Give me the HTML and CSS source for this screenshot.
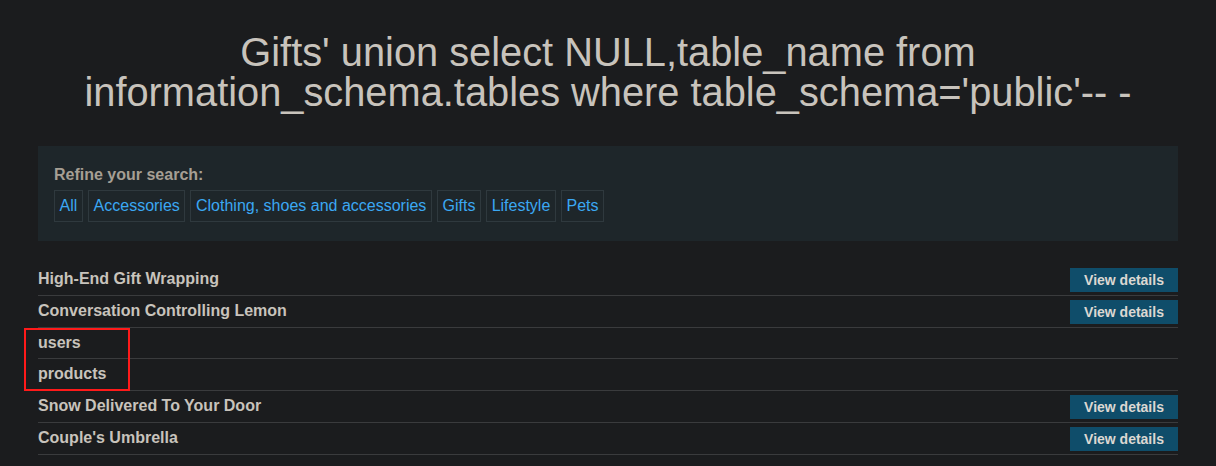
FILE: index.html
```html
<!DOCTYPE html>
<html>
<head>
<meta charset="utf-8">
<link rel="stylesheet" href="styles.css">
</head>
<body>
<div class="container">
  <h1 class="title">Gifts' union select NULL,table_name from information_schema.tables where table_schema='public'-- -</h1>
  <section class="refine">
    <div class="refine-label">Refine your search:</div>
    <div class="filters">
      <a class="filter">All</a>
      <a class="filter">Accessories</a>
      <a class="filter">Clothing, shoes and accessories</a>
      <a class="filter">Gifts</a>
      <a class="filter">Lifestyle</a>
      <a class="filter">Pets</a>
    </div>
  </section>
  <div class="results">
    <div class="row"><span class="name">High-End Gift Wrapping</span><a class="btn">View details</a></div>
    <div class="row"><span class="name">Conversation Controlling Lemon</span><a class="btn">View details</a></div>
    <div class="row short"><span class="name">users</span></div>
    <div class="row"><span class="name">products</span></div>
    <div class="row"><span class="name">Snow Delivered To Your Door</span><a class="btn">View details</a></div>
    <div class="row"><span class="name">Couple's Umbrella</span><a class="btn">View details</a></div>
    <div class="highlight"></div>
  </div>
</div>
</body>
</html>
```
FILE: styles.css
```css
html, body {
  margin: 0;
  padding: 0;
  background: #1b1c1e;
  font-family: "Liberation Sans", Arial, sans-serif;
  color: #c8c3bc;
}
.container {
  width: 1140px;
  margin: 0 auto;
  padding-top: 32px;
}
.title {
  margin: 0;
  text-align: center;
  font-weight: normal;
  font-size: 39.8px;
  line-height: 40px;
  color: #c8c3bc;
  padding: 0 40px;
}
.refine {
  margin-top: 34px;
  background: #1e262a;
  padding: 18px 16px 19px 16px;
}
.refine-label {
  font-weight: bold;
  font-size: 16px;
  line-height: 21px;
  color: #a69f94;
  margin-bottom: 5px;
}
.filters {
  display: flex;
  gap: 5px;
}
.filter {
  display: block;
  border: 1px solid #2f393e;
  padding: 0 4.6px;
  height: 30px;
  line-height: 30px;
  font-size: 16px;
  color: #3ba8f3;
}
.results {
  position: relative;
  margin-top: 23px;
}
.row {
  display: flex;
  align-items: center;
  justify-content: space-between;
  height: 31px;
  border-bottom: 1px solid #3a3b3d;
}
.row.short {
  height: 30px;
}
.name {
  font-weight: bold;
  font-size: 16px;
  color: #c8c3bc;
  padding-bottom: 1px;
}
.btn {
  display: block;
  width: 108px;
  height: 24px;
  line-height: 24px;
  text-align: center;
  background: #0f4d6a;
  color: #dcd8d2;
  font-weight: bold;
  font-size: 14px;
}
.highlight {
  position: absolute;
  left: -14px;
  top: 64px;
  width: 102px;
  height: 59px;
  border: 2px solid #ff1a1a;
}
```
